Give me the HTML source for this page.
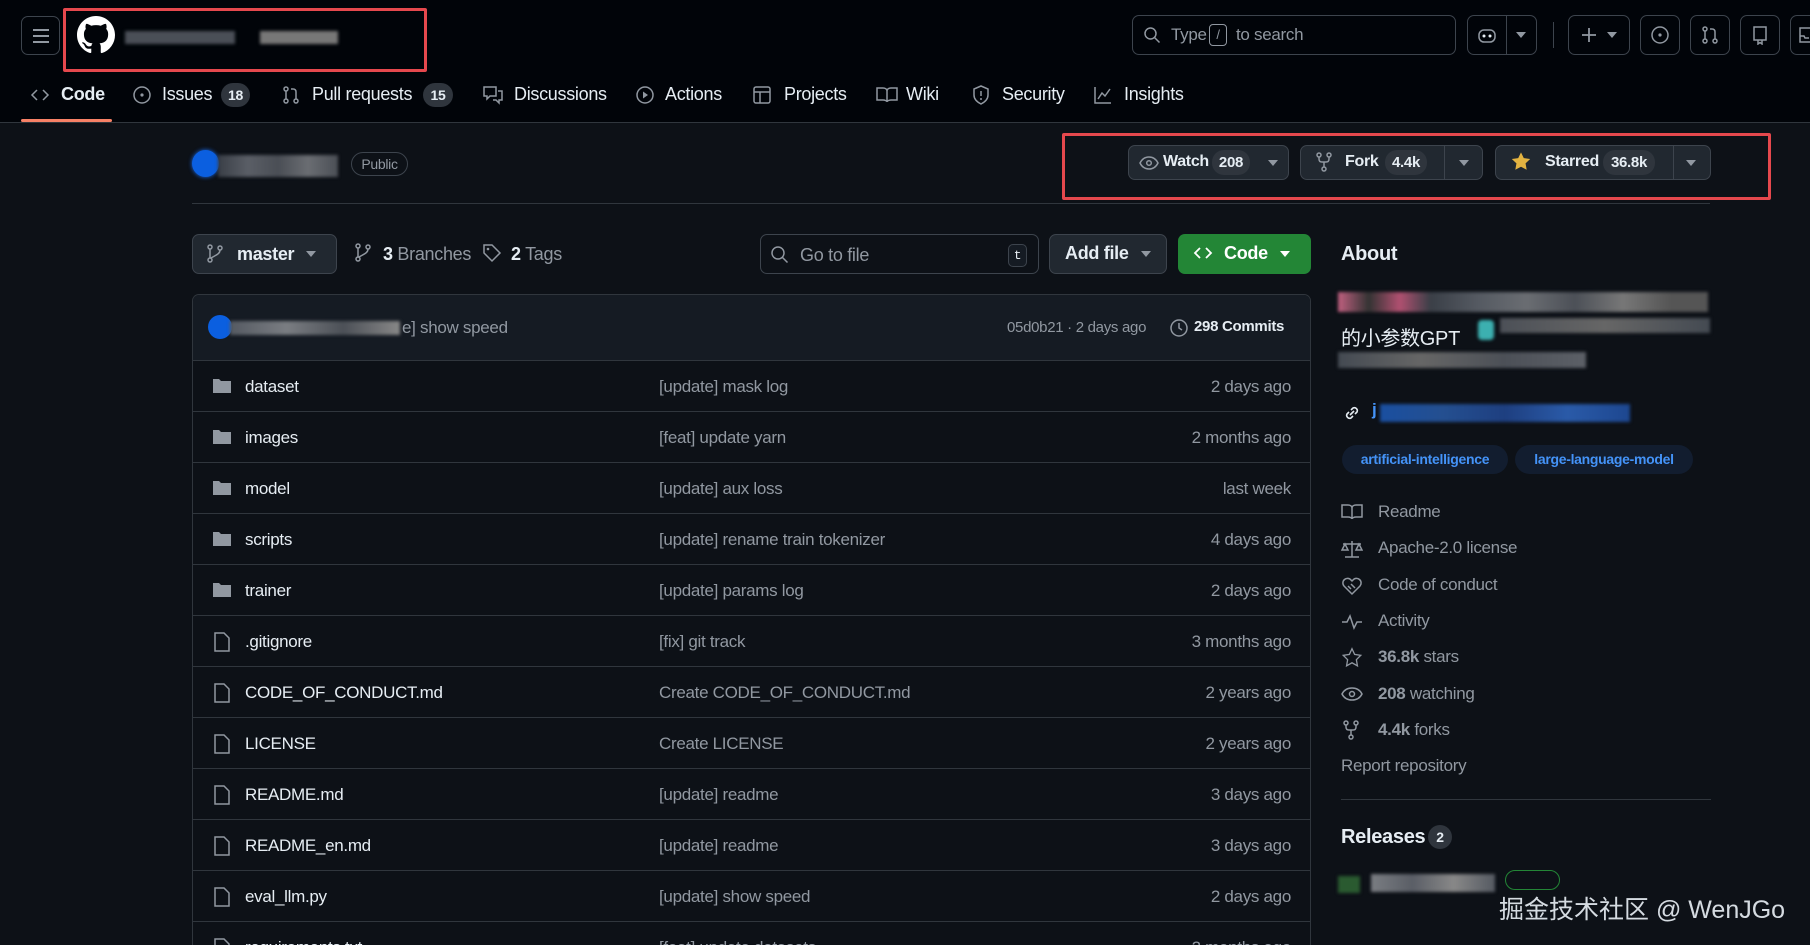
<!DOCTYPE html>
<html style="width:1810px;height:945px;overflow:hidden"><head><meta charset="utf-8">
<style>
*{box-sizing:border-box;margin:0;padding:0}
html,body{overflow:hidden}
body{width:1810px;height:945px;overflow:hidden;background:#0d1117;color:#e6edf3;font-family:"Liberation Sans","Noto Sans CJK SC",sans-serif;font-size:17px;letter-spacing:-0.3px;position:relative}
.a{position:absolute}
.top{position:absolute;left:0;top:0;width:1810px;height:123px;background:#010409;border-bottom:1px solid #30363d}
.btn{position:absolute;border:1px solid #3d444d;border-radius:7px;background:#212830}
.hb{position:absolute;border:1px solid #3d444d;border-radius:7px;background:transparent}
svg{position:absolute}
.ic{stroke:#9198a1;fill:none;stroke-width:1.5}
.nav{position:absolute;top:84px;font-size:18px;color:#e6edf3}
.badge{position:absolute;top:83px;height:24px;border-radius:12px;background:#2f353d;font-size:14px;font-weight:bold;text-align:center;line-height:24px}
.blur{position:absolute;filter:blur(1.5px)}
.row{position:absolute;left:192px;width:1119px;height:51px;border-top:1px solid #30363d}
.row .n{position:absolute;left:53px;top:16px;color:#e6edf3}
.row .m{position:absolute;left:467px;top:16px;color:#9198a1}
.row .d{position:absolute;right:20px;top:16px;color:#9198a1}
.row svg{left:20px;top:16px}
.side{position:absolute;left:1378px;color:#9198a1;font-size:17px}
.sic{position:absolute;left:1341px}
</style></head><body>
<div class="top"></div>
<div class="hb" style="left:21px;top:16px;width:39px;height:39px"></div>
<svg style="left:31px;top:27px" width="20" height="18"><path d="M2 3h16M2 9h16M2 15h16" stroke="#9198a1" stroke-width="2"/></svg>
<svg style="left:77px;top:16px" width="38" height="38" viewBox="0 0 16 16"><path fill="#fff" d="M8 0C3.58 0 0 3.58 0 8c0 3.54 2.290 6.53 5.47 7.59.4.07.55-.17.55-.38 0-.19-.01-.82-.01-1.490-2.01.37-2.53-.49-2.69-.94-.09-.23-.48-.94-.82-1.130-.28-.15-.68-.52-.01-.53.63-.01 1.08.58 1.23.82.72 1.21 1.87.87 2.33.66.07-.52.28-.87.51-1.070-1.78-.2-3.64-.89-3.64-3.95 0-.87.31-1.59.82-2.150-.08-.2-.36-1.020.08-2.12 0 0 .67-.21 2.2.82.64-.18 1.32-.27 2-.27.68 0 1.36.09 2 .27 1.53-1.04 2.2-.82 2.2-.82.44 1.1.16 1.92.08 2.12.51.56.82 1.27.82 2.15 0 3.07-1.87 3.75-3.65 3.95.29.25.54.73.54 1.48 0 1.07-.01 1.93-.01 2.2 0 .21.15.46.55.38A8.013 8.013 0 0016 8c0-4.42-3.58-8-8-8z"/></svg>
<div class="blur" style="left:125px;top:31px;width:110px;height:13px;background:#4a4f57"></div>
<div class="blur" style="left:260px;top:31px;width:78px;height:13px;background:#777"></div>
<div class="a" style="left:63px;top:8px;width:364px;height:64px;border:3px solid #e5484d;border-radius:2px"></div>
<div class="hb" style="left:1132px;top:15px;width:324px;height:40px"></div>
<svg style="left:1143px;top:26px" width="18" height="18"><circle cx="7.5" cy="7.5" r="5.5" class="ic" stroke-width="1.8"/><path d="M11.5 11.5l5 5" class="ic" stroke-width="1.8"/></svg>
<div class="a" style="left:1171px;top:25px;color:#9198a1;font-size:17px">Type</div>
<div class="a" style="left:1209px;top:24px;width:18px;height:22px;border:1px solid #9198a1;border-radius:4px;color:#9198a1;font-size:13px;text-align:center;line-height:20px">/</div>
<div class="a" style="left:1236px;top:25px;color:#9198a1;font-size:17px">to search</div>
<div class="hb" style="left:1467px;top:15px;width:70px;height:40px"></div>
<div class="a" style="left:1506px;top:16px;width:1px;height:38px;background:#3d444d"></div>
<svg style="left:1477px;top:25px" width="20" height="20"><rect x="2" y="5" width="16" height="12" rx="5" class="ic" stroke="#e6edf3"/><circle cx="7" cy="11" r="1.5" fill="#e6edf3"/><circle cx="13" cy="11" r="1.5" fill="#e6edf3"/></svg>
<svg style="left:1516px;top:32px" width="10" height="6"><path d="M0 0h10L5 6z" fill="#9198a1"/></svg>
<div class="a" style="left:1553px;top:22px;width:1px;height:26px;background:#3d444d"></div>
<div class="hb" style="left:1568px;top:15px;width:62px;height:40px"></div>
<svg style="left:1580px;top:26px" width="18" height="18"><path d="M9 2v14M2 9h14" stroke="#9198a1" stroke-width="1.8"/></svg>
<svg style="left:1607px;top:32px" width="10" height="6"><path d="M0 0h10L5 6z" fill="#9198a1"/></svg>
<div class="hb" style="left:1640px;top:15px;width:40px;height:40px"></div>
<svg style="left:1650px;top:25px" width="20" height="20"><circle cx="10" cy="10" r="8" class="ic"/><circle cx="10" cy="10" r="1.6" fill="#9198a1"/></svg>
<div class="hb" style="left:1690px;top:15px;width:40px;height:40px"></div>
<svg style="left:1700px;top:25px" width="20" height="20"><circle cx="5" cy="4" r="2" class="ic"/><circle cx="5" cy="16" r="2" class="ic"/><circle cx="15" cy="16" r="2" class="ic"/><path d="M5 6v8M15 14V7c0-2-1-3-3-3h-2" class="ic"/></svg>
<div class="hb" style="left:1740px;top:15px;width:40px;height:40px"></div>
<svg style="left:1750px;top:25px" width="20" height="20"><path d="M4 2h12v13H4zM4 15h12M8 15v4l2-1.5 2 1.5v-4" class="ic"/></svg>
<div class="hb" style="left:1790px;top:15px;width:40px;height:40px"></div>
<svg style="left:1798px;top:25px" width="12" height="20"><path d="M2 3h12v14H2zM2 11h4l1 2h4" class="ic"/></svg>
<svg style="left:30px;top:86px" width="20" height="18"><path d="M7 4L2 9l5 5M13 4l5 5-5 5" class="ic"/></svg>
<div class="nav" style="left:61px;font-weight:bold">Code</div>
<div class="a" style="left:21px;top:119px;width:91px;height:3px;background:#f78166;border-radius:2px"></div>
<svg style="left:132px;top:85px" width="20" height="20"><circle cx="10" cy="10" r="8" class="ic"/><circle cx="10" cy="10" r="1.6" fill="#9198a1"/></svg>
<div class="nav" style="left:162px">Issues</div>
<div class="badge" style="left:221px;width:29px">18</div>
<svg style="left:281px;top:85px" width="20" height="20"><circle cx="5" cy="4" r="2" class="ic"/><circle cx="5" cy="16" r="2" class="ic"/><circle cx="15" cy="16" r="2" class="ic"/><path d="M5 6v8M15 14V7c0-2-1-3-3-3h-2" class="ic"/></svg>
<div class="nav" style="left:312px">Pull requests</div>
<div class="badge" style="left:423px;width:30px">15</div>
<svg style="left:482px;top:85px" width="22" height="20"><path d="M2 2h12v9H8l-3 3v-3H2zM16 6h4v9h-3v3l-3-3h-3" class="ic"/></svg>
<div class="nav" style="left:514px">Discussions</div>
<svg style="left:635px;top:85px" width="20" height="20"><circle cx="10" cy="10" r="8" class="ic"/><path d="M8 6.5v7l5-3.5z" fill="#9198a1"/></svg>
<div class="nav" style="left:665px">Actions</div>
<svg style="left:752px;top:85px" width="20" height="20"><rect x="2" y="2" width="16" height="16" rx="2" class="ic"/><path d="M2 7h16M8 7v11" class="ic"/></svg>
<div class="nav" style="left:784px">Projects</div>
<svg style="left:876px;top:86px" width="22" height="18"><path d="M1 2h6c2 0 4 1 4 3v11c0-1-2-2-4-2H1zM21 2h-6c-2 0-4 1-4 3v11c0-1 2-2 4-2h6z" class="ic"/></svg>
<div class="nav" style="left:906px">Wiki</div>
<svg style="left:971px;top:85px" width="20" height="20"><path d="M10 1L3 4v6c0 4 3 7 7 9 4-2 7-5 7-9V4z" class="ic"/><path d="M10 6v5" class="ic"/><circle cx="10" cy="14" r="1" fill="#9198a1"/></svg>
<div class="nav" style="left:1002px">Security</div>
<svg style="left:1093px;top:85px" width="20" height="20"><path d="M2 2v16h16M5 14l4-6 3 3 5-7" class="ic"/></svg>
<div class="nav" style="left:1124px">Insights</div>
<div class="a" style="left:192px;top:150px;width:27px;height:27px;border-radius:50%;background:#0b5fe0;box-shadow:0 0 4px #1a6cf0"></div>
<div class="blur" style="left:218px;top:155px;width:120px;height:22px;background:linear-gradient(90deg,#3a3f47,#5a5e66,#4a4e55,#6a6d72,#4b4f56)"></div>
<div class="a" style="left:351px;top:152px;width:57px;height:24px;border:1px solid #3d444d;border-radius:12px;color:#9198a1;font-size:14px;text-align:center;line-height:22px">Public</div>
<div class="btn" style="left:1128px;top:145px;width:161px;height:35px"></div>
<svg style="left:1139px;top:154px" width="20" height="18"><path d="M1 9c2-4 5-6 9-6s7 2 9 6c-2 4-5 6-9 6s-7-2-9-6z" class="ic"/><circle cx="10" cy="9" r="2.3" class="ic"/></svg>
<div class="a" style="left:1163px;top:153px;font-size:16px;font-weight:bold">Watch</div>
<div class="a" style="left:1212px;top:150px;width:38px;height:25px;border-radius:12px;background:#2f353d;font-size:15px;font-weight:bold;text-align:center;line-height:25px">208</div>
<svg style="left:1268px;top:160px" width="10" height="6"><path d="M0 0h10L5 6z" fill="#9198a1"/></svg>
<div class="btn" style="left:1300px;top:145px;width:183px;height:35px"></div>
<div class="a" style="left:1444px;top:146px;width:1px;height:33px;background:#3d444d"></div>
<svg style="left:1316px;top:152px" width="16" height="20"><circle cx="3" cy="3" r="2" class="ic"/><circle cx="13" cy="3" r="2" class="ic"/><circle cx="8" cy="17" r="2" class="ic"/><path d="M3 5v2c0 2 1 3 3 3h4c2 0 3-1 3-3V5M8 10v5" class="ic"/></svg>
<div class="a" style="left:1345px;top:153px;font-size:16px;font-weight:bold">Fork</div>
<div class="a" style="left:1385px;top:150px;width:42px;height:25px;border-radius:12px;background:#2f353d;font-size:15px;font-weight:bold;text-align:center;line-height:25px">4.4k</div>
<svg style="left:1459px;top:160px" width="10" height="6"><path d="M0 0h10L5 6z" fill="#9198a1"/></svg>
<div class="btn" style="left:1495px;top:145px;width:216px;height:35px"></div>
<div class="a" style="left:1673px;top:146px;width:1px;height:33px;background:#3d444d"></div>
<svg style="left:1510px;top:151px" width="22" height="21" viewBox="0 0 24 24"><path d="M12 1.5l3.2 6.6 7.3 1-5.3 5.1 1.3 7.2L12 18l-6.5 3.4 1.3-7.2L1.5 9.1l7.3-1z" fill="#e3b341"/></svg>
<div class="a" style="left:1545px;top:153px;font-size:16px;font-weight:bold">Starred</div>
<div class="a" style="left:1603px;top:150px;width:52px;height:25px;border-radius:12px;background:#2f353d;font-size:15px;font-weight:bold;text-align:center;line-height:25px">36.8k</div>
<svg style="left:1686px;top:160px" width="10" height="6"><path d="M0 0h10L5 6z" fill="#9198a1"/></svg>
<div class="a" style="left:1062px;top:133px;width:709px;height:67px;border:3px solid #e5484d;border-radius:2px"></div>
<div class="a" style="left:192px;top:203px;width:870px;height:1px;background:#30363d"></div>
<div class="a" style="left:1062px;top:203px;width:648px;height:1px;background:#30363d"></div>
<div class="btn" style="left:192px;top:234px;width:145px;height:40px"></div>
<svg style="left:207px;top:244px" width="16" height="20"><circle cx="3" cy="16" r="2" class="ic"/><circle cx="3" cy="3" r="2" class="ic"/><circle cx="13" cy="4" r="2" class="ic"/><path d="M3 5v9M13 6c0 4-4 5-9 8" class="ic"/></svg>
<div class="a" style="left:237px;top:244px;font-weight:bold;font-size:18px">master</div>
<svg style="left:306px;top:251px" width="10" height="6"><path d="M0 0h10L5 6z" fill="#9198a1"/></svg>
<svg style="left:355px;top:243px" width="16" height="20"><circle cx="3" cy="16" r="2" class="ic"/><circle cx="3" cy="3" r="2" class="ic"/><circle cx="13" cy="4" r="2" class="ic"/><path d="M3 5v9M13 6c0 4-4 5-9 8" class="ic"/></svg>
<div class="a" style="left:383px;top:244px;font-size:18px;color:#9198a1"><b style="color:#e6edf3">3</b> Branches</div>
<svg style="left:482px;top:243px" width="20" height="20"><path d="M2 2h8l8 8-8 8-8-8z" class="ic"/><circle cx="6" cy="6" r="1.3" fill="#9198a1"/></svg>
<div class="a" style="left:511px;top:244px;font-size:18px;color:#9198a1"><b style="color:#e6edf3">2</b> Tags</div>
<div class="hb" style="left:760px;top:234px;width:279px;height:40px"></div>
<svg style="left:770px;top:245px" width="20" height="20"><circle cx="8" cy="8" r="6" class="ic" stroke-width="1.8"/><path d="M12.5 12.5l5 5" class="ic" stroke-width="1.8"/></svg>
<div class="a" style="left:800px;top:245px;font-size:18px;color:#9198a1">Go to file</div>
<div class="a" style="left:1008px;top:244px;width:19px;height:23px;border:1px solid #3d444d;border-radius:5px;font-family:'Liberation Mono',monospace;font-size:13px;text-align:center;line-height:21px;background:#151b23">t</div>
<div class="btn" style="left:1049px;top:234px;width:118px;height:40px"></div>
<div class="a" style="left:1065px;top:243px;font-weight:bold;font-size:18px">Add file</div>
<svg style="left:1141px;top:251px" width="10" height="6"><path d="M0 0h10L5 6z" fill="#9198a1"/></svg>
<div class="a" style="left:1178px;top:234px;width:133px;height:40px;border-radius:7px;background:#238636"></div>
<svg style="left:1193px;top:244px" width="20" height="18"><path d="M7 4L2 9l5 5M13 4l5 5-5 5" stroke="#fff" stroke-width="1.8" fill="none"/></svg>
<div class="a" style="left:1224px;top:243px;font-weight:bold;font-size:18px;color:#fff">Code</div>
<svg style="left:1280px;top:251px" width="10" height="6"><path d="M0 0h10L5 6z" fill="#fff"/></svg>
<div class="a" style="left:192px;top:294px;width:1119px;height:651px;border:1px solid #30363d;border-bottom:none;border-radius:7px 7px 0 0;overflow:hidden">
<div class="a" style="left:0;top:0;width:1117px;height:65px;background:#151b23"></div>
</div>
<div class="a" style="left:208px;top:315px;width:24px;height:24px;border-radius:50%;background:#0b5fe0"></div>
<div class="blur" style="left:230px;top:321px;width:170px;height:14px;background:linear-gradient(90deg,#555a62,#7a7d82,#4c5057,#888)"></div>
<div class="a" style="left:402px;top:318px;color:#9198a1">e] show speed</div>
<div class="a" style="left:1007px;top:319px;color:#9198a1;font-size:15px">05d0b21 · 2 days ago</div>
<svg style="left:1168px;top:317px" width="22" height="22"><circle cx="11" cy="11" r="8" class="ic" stroke-width="1.8"/><path d="M11 6v5l3 2" class="ic" stroke-width="1.6"/></svg>
<div class="a" style="left:1194px;top:318px;font-weight:bold;font-size:15px">298 Commits</div>

<div class="row" style="top:360px"><svg width="20" height="18"><path d="M1 2h6l2 2h10v12H1z" fill="#9198a1"/></svg><span class="n">dataset</span><span class="m">[update] mask log</span><span class="d">2 days ago</span></div>
<div class="row" style="top:411px"><svg width="20" height="18"><path d="M1 2h6l2 2h10v12H1z" fill="#9198a1"/></svg><span class="n">images</span><span class="m">[feat] update yarn</span><span class="d">2 months ago</span></div>
<div class="row" style="top:462px"><svg width="20" height="18"><path d="M1 2h6l2 2h10v12H1z" fill="#9198a1"/></svg><span class="n">model</span><span class="m">[update] aux loss</span><span class="d">last week</span></div>
<div class="row" style="top:513px"><svg width="20" height="18"><path d="M1 2h6l2 2h10v12H1z" fill="#9198a1"/></svg><span class="n">scripts</span><span class="m">[update] rename train tokenizer</span><span class="d">4 days ago</span></div>
<div class="row" style="top:564px"><svg width="20" height="18"><path d="M1 2h6l2 2h10v12H1z" fill="#9198a1"/></svg><span class="n">trainer</span><span class="m">[update] params log</span><span class="d">2 days ago</span></div>
<div class="row" style="top:615px"><svg width="20" height="20"><path d="M3 1h9l5 5v13H3z" class="ic"/></svg><span class="n">.gitignore</span><span class="m">[fix] git track</span><span class="d">3 months ago</span></div>
<div class="row" style="top:666px"><svg width="20" height="20"><path d="M3 1h9l5 5v13H3z" class="ic"/></svg><span class="n">CODE_OF_CONDUCT.md</span><span class="m">Create CODE_OF_CONDUCT.md</span><span class="d">2 years ago</span></div>
<div class="row" style="top:717px"><svg width="20" height="20"><path d="M3 1h9l5 5v13H3z" class="ic"/></svg><span class="n">LICENSE</span><span class="m">Create LICENSE</span><span class="d">2 years ago</span></div>
<div class="row" style="top:768px"><svg width="20" height="20"><path d="M3 1h9l5 5v13H3z" class="ic"/></svg><span class="n">README.md</span><span class="m">[update] readme</span><span class="d">3 days ago</span></div>
<div class="row" style="top:819px"><svg width="20" height="20"><path d="M3 1h9l5 5v13H3z" class="ic"/></svg><span class="n">README_en.md</span><span class="m">[update] readme</span><span class="d">3 days ago</span></div>
<div class="row" style="top:870px"><svg width="20" height="20"><path d="M3 1h9l5 5v13H3z" class="ic"/></svg><span class="n">eval_llm.py</span><span class="m">[update] show speed</span><span class="d">2 days ago</span></div>
<div class="row" style="top:921px;height:24px;overflow:hidden"><svg width="20" height="20"><path d="M3 1h9l5 5v13H3z" class="ic"/></svg><span class="n">requirements.txt</span><span class="m">[feat] update datasets</span><span class="d">2 months ago</span></div>
<div class="a" style="left:1341px;top:243px;font-size:20px;font-weight:bold">About</div>
<div class="blur" style="left:1338px;top:292px;width:370px;height:20px;background:linear-gradient(90deg,#c06080,#333,#b05070,#3a3f47 25%,#555a62,#6a6d72,#4c5057,#777,#555 90%)"></div>
<div class="a" style="left:1341px;top:322px;font-size:20px;white-space:nowrap">的小参数GPT</div>
<div class="blur" style="left:1478px;top:320px;width:16px;height:20px;background:#3cb0b0;border-radius:4px"></div>
<div class="blur" style="left:1500px;top:318px;width:210px;height:15px;background:linear-gradient(90deg,#4c5057,#666,#444a52)"></div>
<div class="blur" style="left:1338px;top:352px;width:248px;height:16px;background:linear-gradient(90deg,#444a52,#666,#4c5057,#5c6067)"></div>
<svg style="left:1342px;top:403px" width="20" height="20"><path d="M8 12l4-4M7 9l-2 2a3 3 0 004 4l2-2M13 11l2-2a3 3 0 00-4-4L9 7" stroke="#e6edf3" stroke-width="1.6" fill="none"/></svg>
<div class="a" style="left:1372px;top:400px;color:#4493f8;font-weight:bold">j</div>
<div class="blur" style="left:1380px;top:404px;width:250px;height:18px;background:linear-gradient(90deg,#1a4fa0,#244f90,#1e3f80,#2a5aa8,#1d4790)"></div>
<div class="a" style="left:1342px;top:445px;width:166px;height:29px;border-radius:15px;background:#121d2f;color:#4493f8;font-size:14px;font-weight:bold;text-align:center;line-height:29px">artificial-intelligence</div>
<div class="a" style="left:1515px;top:445px;width:178px;height:29px;border-radius:15px;background:#121d2f;color:#4493f8;font-size:14px;font-weight:bold;text-align:center;line-height:29px">large-language-model</div>
<svg class="sic" style="top:503px" width="22" height="18"><path d="M1 2h6c2 0 4 1 4 3v11c0-1-2-2-4-2H1zM21 2h-6c-2 0-4 1-4 3v11c0-1 2-2 4-2h6z" class="ic"/></svg>
<div class="side" style="top:502px">Readme</div>
<svg class="sic" style="top:539px" width="22" height="20"><path d="M11 2v16M4 18h14M2 5h18M4 5l-3 6h6zM18 5l-3 6h6z" class="ic"/></svg>
<div class="side" style="top:538px">Apache-2.0 license</div>
<svg class="sic" style="top:576px" width="22" height="20"><path d="M11 18L3 10a4.5 4.5 0 017-6l1 1 1-1a4.5 4.5 0 017 6zM7 10l3 3M10 8l4 4" class="ic"/></svg>
<div class="side" style="top:575px">Code of conduct</div>
<svg class="sic" style="top:612px" width="22" height="20"><path d="M1 10h5l3-6 4 12 3-6h5" class="ic"/></svg>
<div class="side" style="top:611px">Activity</div>
<svg class="sic" style="top:647px" width="22" height="21" viewBox="0 0 24 24"><path d="M12 2l3 6.5 7 1-5 5 1.2 7L12 18l-6.2 3.5L7 14.5l-5-5 7-1z" class="ic" stroke-width="1.7"/></svg>
<div class="side" style="top:647px"><b style="color:#9198a1">36.8k</b> stars</div>
<svg class="sic" style="top:685px" width="22" height="18"><path d="M1 9c2-4 5-6 10-6s8 2 10 6c-2 4-5 6-10 6S3 13 1 9z" class="ic"/><circle cx="11" cy="9" r="2.5" class="ic"/></svg>
<div class="side" style="top:684px"><b style="color:#9198a1">208</b> watching</div>
<svg class="sic" style="top:720px" width="22" height="20"><circle cx="5" cy="3" r="2" class="ic"/><circle cx="15" cy="3" r="2" class="ic"/><circle cx="10" cy="17" r="2" class="ic"/><path d="M5 5v2c0 2 1 3 3 3h4c2 0 3-1 3-3V5M10 10v5" class="ic"/></svg>
<div class="side" style="top:720px"><b style="color:#9198a1">4.4k</b> forks</div>
<div class="side" style="left:1341px;top:756px">Report repository</div>
<div class="a" style="left:1341px;top:799px;width:370px;height:1px;background:#30363d"></div>
<div class="a" style="left:1341px;top:826px;font-size:20px;font-weight:bold">Releases</div>
<div class="a" style="left:1428px;top:825px;width:24px;height:24px;border-radius:12px;background:#2f353d;font-size:14px;font-weight:bold;text-align:center;line-height:24px">2</div>
<div class="blur" style="left:1338px;top:876px;width:22px;height:17px;background:#2a5a30"></div>
<div class="blur" style="left:1371px;top:874px;width:124px;height:18px;background:linear-gradient(90deg,#7a7d82,#5a5e66,#888,#555a62)"></div>
<div class="a" style="left:1505px;top:870px;width:55px;height:20px;border:1px solid #238636;border-radius:10px"></div>
<div class="a" style="left:1499px;top:890px;font-size:25px;color:#e6edf3;letter-spacing:0;opacity:.92">掘金技术社区 @ WenJGo</div>
</body></html>
